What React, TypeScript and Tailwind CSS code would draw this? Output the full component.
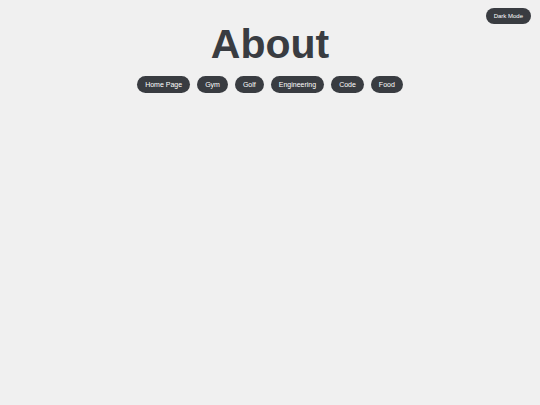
import React from "react";

export default function App() {
  const links = ["Home Page", "Gym", "Golf", "Engineering", "Code", "Food"];
  return (
    <div className="min-h-[405px] w-full bg-[#f0f0f0] font-['Liberation_Sans',Arial,sans-serif] relative">
      <button className="absolute right-[9px] top-[8px] h-[16px] px-[8px] rounded-full bg-[#393c41] text-white text-[6px] leading-none">
        Dark Mode
      </button>
      <div className="flex flex-col items-center pt-[20px]">
        <h1 className="text-[41px] font-bold leading-[48px] text-[#393c41]">About</h1>
        <nav className="mt-[8px] flex gap-[7px]">
          {links.map((l) => (
            <button
              key={l}
              className="h-[17px] px-[8px] rounded-full bg-[#393c41] text-white text-[7px] leading-none"
            >
              {l}
            </button>
          ))}
        </nav>
      </div>
    </div>
  );
}
